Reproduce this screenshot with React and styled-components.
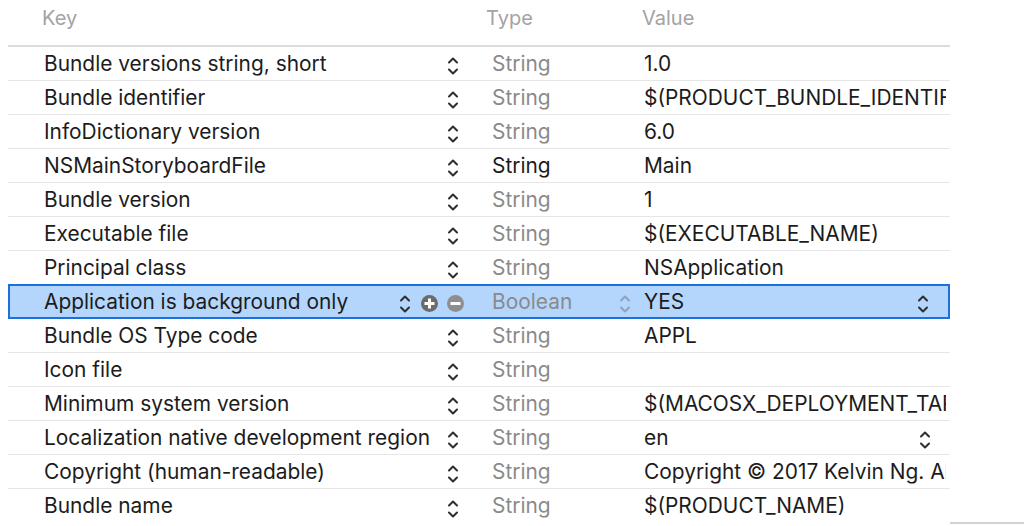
import React from 'react';
import styled, { createGlobalStyle } from 'styled-components';

const GlobalStyle = createGlobalStyle`
  html, body {
    margin: 0;
    padding: 0;
    background: #fff;
  }
  body {
    font-family: Inter, "Liberation Sans", Arial, sans-serif;
    -webkit-font-smoothing: antialiased;
  }
`;

const Page = styled.div`
  display: flex;
  width: 1024px;
  height: 526px;
  overflow: hidden;
`;

const Table = styled.div`
  width: 942px;
  margin-left: 8px;
  display: flex;
  flex-direction: column;
`;

// filler right of the table, only the window edge line at the bottom
const SideEdge = styled.div`
  flex: 1;
  height: 522px;
  border-bottom: 2px solid #d2d2d2;
`;

const HeaderRow = styled.div`
  display: grid;
  grid-template-columns: 472px 156px 1fr;
  height: 47px;
  border-bottom: 2px solid #dcdcdc;
  box-sizing: border-box;
  align-items: center;
  font-size: 20px;
  color: #a3a3a3;
  padding-bottom: 10px;
`;

const HeaderCell = styled.div`
  padding-left: ${(p) => p.$pad}px;
`;

const Row = styled.div`
  display: grid;
  grid-template-columns: 460px 168px 1fr;
  box-sizing: border-box;
  align-items: center;
  font-size: 20.9px;
  color: #1c1c1c;
  border: ${(p) => (p.$selected ? '2px solid #1a71dc' : 'none')};
  border-bottom: ${(p) => (p.$selected ? '2px solid #1a71dc' : p.$last ? 'none' : '1px solid #e6e6e6')};
  background: ${(p) => (p.$selected ? '#b4d6fc' : 'transparent')};
  margin-top: ${(p) => (p.$selected ? '-1px' : '0')};
  height: ${(p) => (p.$selected ? '35px' : '34px')};
  padding-left: ${(p) => (p.$selected ? '0' : '2px')};
  padding-bottom: 1px;
`;

const KeyCell = styled.div`
  display: flex;
  align-items: center;
  padding-left: 34px;
  padding-right: ${(p) => (p.$selected ? '6px' : '10px')};
  white-space: nowrap;
`;

const KeyText = styled.span`
  flex: 1;
  overflow: hidden;
`;

const Controls = styled.div`
  display: flex;
  align-items: center;
  gap: 9px;
`;

const TypeCell = styled.div`
  display: flex;
  align-items: center;
  padding-left: 22px;
  padding-right: 6px;
  color: ${(p) => (p.$strong ? '#1c1c1c' : '#8a8a8a')};
`;

const TypeText = styled.span`
  flex: 1;
`;

const ValueCell = styled.div`
  display: flex;
  align-items: center;
  padding-left: 6px;
  padding-right: 4px;
  white-space: nowrap;
  overflow: hidden;
`;

const ValueText = styled.span`
  flex: 1;
  overflow: hidden;
`;

const StepperIcon = styled.svg`
  width: 14px;
  height: 20px;
  flex: none;
  margin-top: 6px;
  margin-right: ${(p) => p.$gapRight || 0}px;
`;

const CircleButton = styled.div`
  width: 17px;
  height: 17px;
  border-radius: 50%;
  background: ${(p) => p.$color};
  display: flex;
  align-items: center;
  justify-content: center;
  flex: none;
  margin-top: 4px;
`;

const Stepper = ({ color = '#2e2e2e', gapRight }) => (
  <StepperIcon
    $gapRight={gapRight}
    viewBox="0 0 14 20"
    fill="none"
    stroke={color}
    strokeWidth="2"
    strokeLinecap="round"
    strokeLinejoin="round"
  >
    <path d="M3 6.5 L7 2.5 L11 6.5" />
    <path d="M3 13.5 L7 17.5 L11 13.5" />
  </StepperIcon>
);

const PlusMinus = ({ plus }) => (
  <svg width="11" height="11" viewBox="0 0 11 11">
    <rect x="0.5" y="4" width="10" height="3" fill="#fff" />
    {plus && <rect x="4" y="0.5" width="3" height="10" fill="#fff" />}
  </svg>
);

const rows = [
  { key: 'Bundle versions string, short', type: 'String', value: '1.0' },
  { key: 'Bundle identifier', type: 'String', value: '$(PRODUCT_BUNDLE_IDENTIFIER)' },
  { key: 'InfoDictionary version', type: 'String', value: '6.0' },
  { key: 'NSMainStoryboardFile', type: 'String', value: 'Main', strong: true },
  { key: 'Bundle version', type: 'String', value: '1' },
  { key: 'Executable file', type: 'String', value: '$(EXECUTABLE_NAME)' },
  { key: 'Principal class', type: 'String', value: 'NSApplication' },
  { key: 'Application is background only', type: 'Boolean', value: 'YES', selected: true },
  { key: 'Bundle OS Type code', type: 'String', value: 'APPL' },
  { key: 'Icon file', type: 'String', value: '' },
  { key: 'Minimum system version', type: 'String', value: '$(MACOSX_DEPLOYMENT_TARGET)' },
  { key: 'Localization native development region', type: 'String', value: 'en', valueStepper: true },
  { key: 'Copyright (human-readable)', type: 'String', value: 'Copyright © 2017 Kelvin Ng. All rights reserved.' },
  { key: 'Bundle name', type: 'String', value: '$(PRODUCT_NAME)' },
];

export default function App() {
  return (
    <>
      <GlobalStyle />
      <Page>
        <Table>
          <HeaderRow>
            <HeaderCell $pad={34}>Key</HeaderCell>
            <HeaderCell $pad={6}>Type</HeaderCell>
            <HeaderCell $pad={6}>Value</HeaderCell>
          </HeaderRow>
          {rows.map((r, i) => (
            <Row key={r.key} $selected={r.selected} $last={i === rows.length - 1}>
              <KeyCell $selected={r.selected}>
                <KeyText>{r.key}</KeyText>
                {r.selected ? (
                  <Controls>
                    <Stepper />
                    <CircleButton $color="#6b6b6b">
                      <PlusMinus plus />
                    </CircleButton>
                    <CircleButton $color="#8e8e8e">
                      <PlusMinus />
                    </CircleButton>
                  </Controls>
                ) : (
                  <Stepper />
                )}
              </KeyCell>
              <TypeCell $strong={r.strong}>
                <TypeText>{r.type}</TypeText>
                {r.selected && <Stepper color="#8fa3b8" />}
              </TypeCell>
              <ValueCell>
                <ValueText>{r.value}</ValueText>
                {(r.selected || r.valueStepper) && <Stepper gapRight={14} />}
              </ValueCell>
            </Row>
          ))}
        </Table>
        <SideEdge />
      </Page>
    </>
  );
}
